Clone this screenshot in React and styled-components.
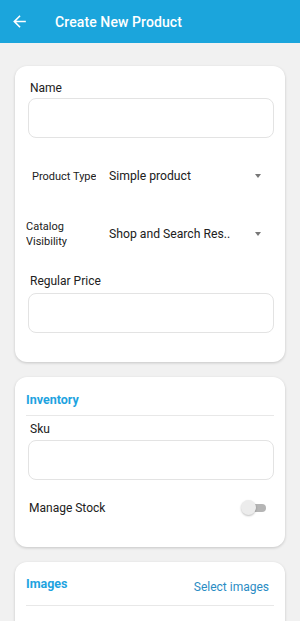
import React from 'react';
import styled, { createGlobalStyle } from 'styled-components';

const GlobalStyle = createGlobalStyle`
  html, body {
    margin: 0;
    padding: 0;
    background: #f1f1f1;
    font-family: Roboto, "Noto Sans", Arial, sans-serif;
  }
  * { box-sizing: border-box; }
`;

const Page = styled.div`
  width: 300px;
  min-height: 621px;
  background: #f1f1f1;
  overflow: hidden;
`;

const AppBar = styled.header`
  height: 43px;
  background: #1ba5dc;
  display: flex;
  align-items: center;
  padding-left: 10px;
  color: #fff;
`;

const BackButton = styled.div`
  width: 19px;
  height: 19px;
  display: flex;
  align-items: center;
  justify-content: center;
  margin-right: 26px;
`;

const Title = styled.h1`
  margin: 0;
  font-size: 14px;
  font-weight: 500;
  letter-spacing: 0.1px;
`;

const Content = styled.main`
  padding: 23px 15px 0;
  display: flex;
  flex-direction: column;
  gap: 15px;
`;

const Card = styled.section`
  background: #fff;
  border-radius: 12px;
  box-shadow: 0 1px 3px rgba(0, 0, 0, 0.18);
  padding: ${p => p.$pad || '14px 11px 29px 13px'};
`;

const Label = styled.div`
  font-size: 12px;
  color: #212121;
  line-height: 16px;
  padding-left: ${p => p.$pl ?? 2}px;
  margin-bottom: ${p => p.$mb ?? 4}px;
`;

const Input = styled.div`
  height: 40px;
  border: 1px solid #e3e3e3;
  border-radius: 8px;
  background: #fff;
  margin-left: ${p => p.$ml || 0}px;
`;

const SelectRow = styled.div`
  height: 48px;
  display: flex;
  align-items: center;
  margin-top: ${p => p.$mt || 0}px;
`;

const SelectLabel = styled.div`
  width: ${p => p.$w || 81}px;
  margin-left: ${p => p.$ml || 0}px;
  margin-right: ${p => p.$mr || 0}px;
  padding-left: ${p => p.$pl || 0}px;
  font-size: 11px;
  line-height: 15px;
  color: #212121;
  flex-shrink: 0;
  white-space: nowrap;
  overflow: hidden;
`;

const SelectValue = styled.div`
  flex: 1;
  font-size: 12.2px;
  color: #212121;
  white-space: nowrap;
`;

const Caret = styled.div`
  width: 0;
  height: 0;
  border-left: 3.5px solid transparent;
  border-right: 3.5px solid transparent;
  border-top: 4px solid #777;
  margin-right: 13px;
`;

const SectionHead = styled.div`
  display: flex;
  align-items: flex-start;
  justify-content: space-between;
  height: ${p => p.$h || 35}px;
  border-bottom: 1px solid #e8e8e8;
`;

const SectionTitle = styled.h2`
  margin: 0;
  font-size: 12.5px;
  line-height: 16px;
  font-weight: 700;
  color: #1ea3df;
`;

const LinkText = styled.span`
  font-size: 12px;
  line-height: 16px;
  color: #2a8cc4;
  margin-right: 5px;
  margin-top: 3px;
`;

const ToggleRow = styled.div`
  display: flex;
  align-items: center;
  justify-content: space-between;
  height: 56px;
  padding: 0 8px 0 3px;
`;

const ToggleText = styled.span`
  font-size: 12px;
  color: #212121;
`;

const Track = styled.div`
  position: relative;
  width: 22px;
  height: 8px;
  border-radius: 4px;
  background: #b5b5b5;
`;

const Thumb = styled.div`
  position: absolute;
  left: -3px;
  top: -4px;
  width: 15px;
  height: 15px;
  border-radius: 50%;
  background: #ececec;
  box-shadow: 0 1px 2px rgba(0, 0, 0, 0.25);
`;

const Spacer = styled.div`
  height: ${p => p.$h || 0}px;
  flex-shrink: 0;
`;

export default function App() {
  return (
    <Page>
      <GlobalStyle />
      <AppBar>
        <BackButton>
          <svg width="19" height="19" viewBox="0 0 24 24" fill="#fff">
            <path d="M20 11H7.83l5.59-5.59L12 4l-8 8 8 8 1.41-1.41L7.83 13H20v-2z" />
          </svg>
        </BackButton>
        <Title>Create New Product</Title>
      </AppBar>
      <Content>
        <Card>
          <Label $mb={2}>Name</Label>
          <Input />
          <SelectRow $mt={14}>
            <SelectLabel $pl={4} $w={68} $mr={13}>Product Type</SelectLabel>
            <SelectValue>Simple product</SelectValue>
            <Caret />
          </SelectRow>
          <SelectRow $mt={10}>
            <SelectLabel $ml={-2} $w={83}>Catalog<br />Visibility</SelectLabel>
            <SelectValue>Shop and Search Res..</SelectValue>
            <Caret />
          </SelectRow>
          <Spacer $h={15} />
          <Label>Regular Price</Label>
          <Input />
        </Card>
        <Card $pad="15px 11px 11px 11px">
          <SectionHead $h={24}>
            <SectionTitle>Inventory</SectionTitle>
          </SectionHead>
          <Spacer $h={5} />
          <Label $pl={4} $mb={3}>Sku</Label>
          <Input $ml={2} />
          <ToggleRow>
            <ToggleText>Manage Stock</ToggleText>
            <Track>
              <Thumb />
            </Track>
          </ToggleRow>
        </Card>
        <Card $pad="14px 11px 30px 11px">
          <SectionHead $h={30}>
            <SectionTitle>Images</SectionTitle>
            <LinkText>Select images</LinkText>
          </SectionHead>
        </Card>
      </Content>
    </Page>
  );
}
